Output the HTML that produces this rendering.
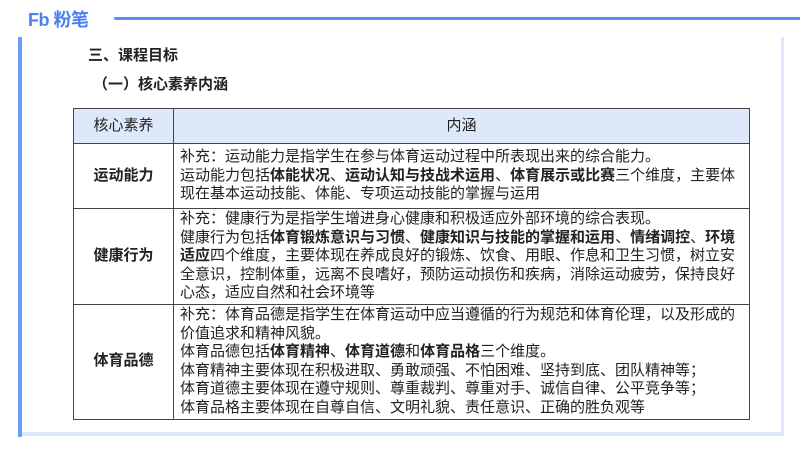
<!DOCTYPE html>
<html><head><meta charset="utf-8"><style>
*{margin:0;padding:0;box-sizing:border-box}
body{width:800px;height:450px;background:#fff;position:relative;overflow:hidden;font-family:"Liberation Sans","Noto Sans CJK SC",sans-serif;color:#222}
.logo{position:absolute;left:28px;top:10px;font-size:18px;line-height:20px;font-weight:bold;color:#4a80f0;letter-spacing:-0.5px}
.topline{position:absolute;left:114px;top:17px;width:690px;height:3px;background:#5b8ef2;border-radius:2px}
.lline{position:absolute;left:18px;top:37px;width:4px;height:400px;background:#6d9af3}
.frame{position:absolute;left:20px;top:37px;width:764px;height:399px;border-right:3px solid #dce7fb;border-bottom:4px solid #dce7fb}
h1{position:absolute;left:88px;top:44px;font-size:15px;font-weight:bold}
h2{position:absolute;left:93px;top:73px;font-size:15px;font-weight:bold}
table{position:absolute;left:73px;top:108px;width:677px;border-collapse:collapse;font-size:15px;line-height:18.5px}
td{border:1px solid #444;vertical-align:middle}
td.k{width:100px;text-align:center;font-weight:bold}
td.c{padding:1px 0 1px 6px;white-space:nowrap}
tr.h td{background:#dde8fa;height:35px;text-align:center;font-weight:normal}
b{font-weight:bold}
</style></head><body>
<div class="logo">Fb 粉笔</div>
<div class="topline"></div>
<div class="frame"></div>
<div class="lline"></div>
<h1>三、课程目标</h1>
<h2>（一）核心素养内涵</h2>
<table>
<tr class="h"><td style="width:100px">核心素养</td><td>内涵</td></tr>
<tr style="height:65px"><td class="k">运动能力</td><td class="c">补充：运动能力是指学生在参与体育运动过程中所表现出来的综合能力。<br>运动能力包括<b>体能状况</b>、<b>运动认知与技战术运用</b>、<b>体育展示或比赛</b>三个维度，主要体<br>现在基本运动技能、体能、专项运动技能的掌握与运用</td></tr>
<tr style="height:95px"><td class="k">健康行为</td><td class="c">补充：健康行为是指学生增进身心健康和积极适应外部环境的综合表现。<br>健康行为包括<b>体育锻炼意识与习惯</b>、<b>健康知识与技能的掌握和运用</b>、<b>情绪调控</b>、<b>环境<br>适应</b>四个维度，主要体现在养成良好的锻炼、饮食、用眼、作息和卫生习惯，树立安<br>全意识，控制体重，远离不良嗜好，预防运动损伤和疾病，消除运动疲劳，保持良好<br>心态，适应自然和社会环境等</td></tr>
<tr style="height:115px"><td class="k">体育品德</td><td class="c">补充：体育品德是指学生在体育运动中应当遵循的行为规范和体育伦理，以及形成的<br>价值追求和精神风貌。<br>体育品德包括<b>体育精神</b>、<b>体育道德</b>和<b>体育品格</b>三个维度。<br>体育精神主要体现在积极进取、勇敢顽强、不怕困难、坚持到底、团队精神等；<br>体育道德主要体现在遵守规则、尊重裁判、尊重对手、诚信自律、公平竞争等；<br>体育品格主要体现在自尊自信、文明礼貌、责任意识、正确的胜负观等</td></tr>
</table>
</body></html>
